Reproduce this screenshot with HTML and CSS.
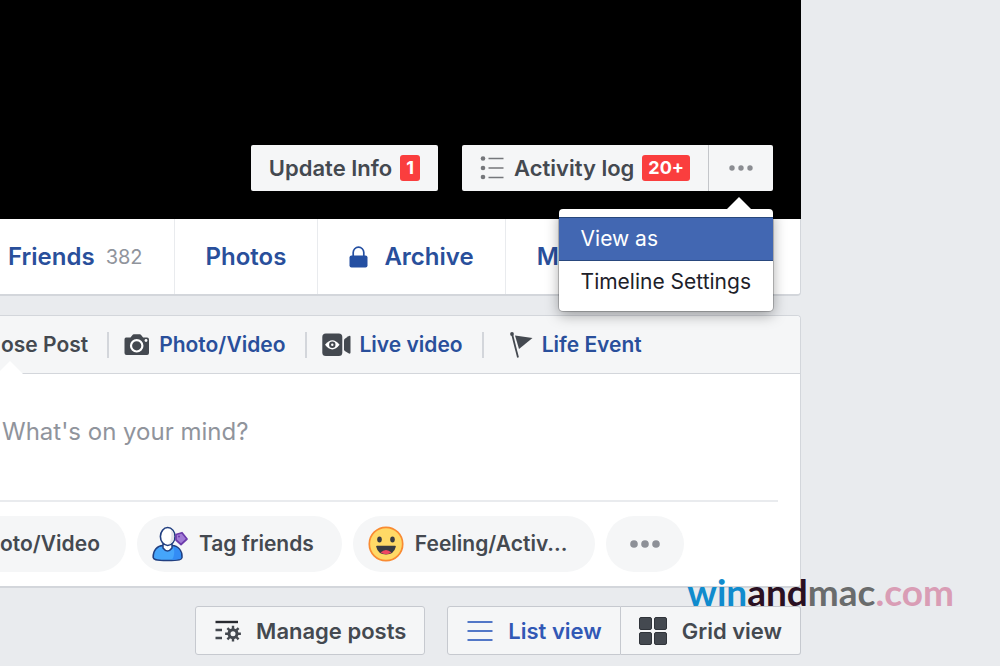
FILE: index.html
```html
<!DOCTYPE html>
<html lang="en">
<head>
    <meta charset="UTF-8">
    <meta name="viewport" content="width=device-width, initial-scale=1.0">
    <title>Timeline</title>
    <link rel="stylesheet" href="styles.css">
</head>
<body>

    <main class="timeline">
        <section class="profile">
            <div class="cover">
                <button class="cover-button" type="button">Update Info <span class="badge">1</span></button>
                <div class="button-group">
                    <button class="cover-button activity" type="button">
                        <svg width="24" height="24" viewBox="0 0 24 24" fill="none" stroke="#75777b">
                            <path d="M8.500 2.500h15M8.500 12h15M8.500 21.500h15" stroke-width="1.500"/>
                            <g fill="#75777b" stroke="none">
                                <circle cx="3" cy="2.500" r="2.300"/>
                                <circle cx="3" cy="12" r="2.300"/>
                                <circle cx="3" cy="21" r="2.300"/>
                            </g>
                        </svg>
                        Activity log <span class="badge">20+</span>
                    </button>
                    <div class="menu-anchor">
                        <button class="cover-button more" type="button" aria-label="More options" aria-expanded="true">
                            <svg width="24" height="6" viewBox="0 0 24 6" fill="#8b8d92">
                                <circle cx="3" cy="3" r="2.700"/>
                                <circle cx="12" cy="3" r="2.700"/>
                                <circle cx="21" cy="3" r="2.700"/>
                            </svg>
                        </button>
                        <div class="menu">
                            <a href="#" class="menu-item selected">View as</a>
                            <a href="#" class="menu-item">Timeline Settings</a>
                        </div>
                    </div>
                </div>
            </div>
            <nav class="tabs">
                <a href="#" class="tab">Friends <span class="count">382</span></a>
                <a href="#" class="tab">Photos</a>
                <a href="#" class="tab">
                    <svg class="lock" width="19" height="22" viewBox="0 0 19 22">
                        <path d="M4.200 10V6.500a5.300 5.300 0 0 1 10.600 0V10" fill="none" stroke="#244fa2" stroke-width="1.700"/>
                        <rect x="0.500" y="9.500" width="18" height="12" rx="2" fill="#244fa2"/>
                    </svg>
                    Archive
                </a>
                <a href="#" class="tab">M</a>
            </nav>
        </section>

        <section class="composer">
            <div class="composer-tabs">
                <a href="#" class="composer-tab current">ose Post</a>
                <a href="#" class="composer-tab">
                    <svg width="26" height="22" viewBox="0 0 26 22">
                        <path d="M2 3.500h4.500L8.500 1q.5-.7 1.300-.7h6q.8 0 1.300.7l2 2.500H23q2 0 2 2V19q0 2-2 2H2.500q-2 0-2-2V5.500q0-2 1.500-2z" fill="#444950"/>
                        <circle cx="12.700" cy="11.800" r="5.700" fill="#444950" stroke="#fff" stroke-width="2.200"/>
                        <circle cx="22" cy="6.500" r="1.400" fill="#fff"/>
                    </svg>
                    Photo/Video
                </a>
                <a href="#" class="composer-tab">
                    <svg width="29" height="24" viewBox="0 0 29 24">
                        <rect x="0.300" y="0.500" width="20" height="22.500" rx="3.500" fill="#444950"/>
                        <path d="M22 7.500q0-1 .8-1.700l3.700-2.600q2-1 2 .8v15.500q0 1.800-2 .8L22.800 18q-.8-.6-.8-1.700z" fill="#444950"/>
                        <path d="M3 11.800Q10.300 2.500 17.600 11.800Q10.300 21 3 11.800z" fill="#fff"/>
                        <circle cx="10.300" cy="11.800" r="3.200" fill="#444950"/>
                        <circle cx="10.300" cy="11.800" r="1.200" fill="#fff"/>
                    </svg>
                    Live video
                </a>
                <a href="#" class="composer-tab">
                    <svg width="23" height="26" viewBox="0 0 23 26">
                        <circle cx="2" cy="2" r="1.900" fill="#444950"/>
                        <path d="M2.300 3L8 25.500" stroke="#444950" stroke-width="1.800"/>
                        <path d="M5 3.500L22.500 6L9 17z" fill="#444950"/>
                    </svg>
                    Life Event
                </a>
            </div>
            <textarea class="status" rows="1" placeholder="What's on your mind?" aria-label="What's on your mind?"></textarea>
            <div class="attachments">
                <button class="pill first" type="button">oto/Video</button>
                <button class="pill" type="button">
                    <svg width="36" height="36" viewBox="0 0 36 36" stroke-linejoin="round">
                        <path d="M1.200 31.500C1 24 5.500 19.800 11 19.500h9c6 .3 10.300 5 10 12-.2 2-2 3-14.500 3S1.400 33.500 1.200 31.500z" fill="#45a5fb" stroke="#213f80" stroke-width="1.600"/>
                        <path d="M21 20.500q3 7-1 13.200c7-.2 9-.7 9.200-2 .3-7-3-10.700-8.200-11.200z" fill="#338cf5"/>
                        <path d="M11 18v4q4.500 6 9 0v-4z" fill="#fff" stroke="#213f80" stroke-width="1.500"/>
                        <ellipse cx="15.700" cy="10.500" rx="7.300" ry="9" fill="#fff" stroke="#213f80" stroke-width="1.600"/>
                        <path d="M19 3.500q1.500 8-2 15c6-1.500 7-12 2-15z" fill="#e1e3e8"/>
                        <path d="M24 8.500l6-1.800 5 6.300-6 5.500-5-4.500z" fill="#a17bd6" stroke="#6c3bab" stroke-width="1.700"/>
                        <circle cx="27" cy="10.500" r="1" fill="#6c3bab"/>
                    </svg>
                    Tag friends
                </button>
                <button class="pill" type="button">
                    <svg width="36" height="36" viewBox="0 0 36 36">
                        <circle cx="18" cy="18" r="16.700" fill="#ffd966" stroke="#f98b32" stroke-width="1.700"/>
                        <ellipse cx="11.500" cy="13.500" rx="2.300" ry="2.900" fill="#383b42"/>
                        <ellipse cx="24.500" cy="13.500" rx="2.300" ry="2.900" fill="#383b42"/>
                        <path d="M9 19.800h18q1 0 .8 1Q26 28.500 18 28.500T8.200 20.800q-.2-1 .8-1z" fill="#383b42"/>
                        <path d="M12.500 26.500Q18 21.500 23.500 26.500Q18 30 12.500 26.500z" fill="#f04662"/>
                    </svg>
                    Feeling/Activ...
                </button>
                <button class="pill dots" type="button" aria-label="More">
                    <svg width="30" height="8" viewBox="0 0 30 8" fill="#8d9097">
                        <circle cx="4" cy="4" r="3.800"/>
                        <circle cx="15" cy="4" r="3.800"/>
                        <circle cx="26" cy="4" r="3.800"/>
                    </svg>
                </button>
            </div>
        </section>

        <div class="view-bar">
            <button class="view-button" type="button">
                <svg width="26" height="22" viewBox="0 0 26 22" fill="none" stroke="#444950">
                    <path d="M0.500 2H23" stroke-width="2.400" stroke="#282b31"/>
                    <path d="M0.500 10H7M0.500 18H7" stroke-width="2.400"/>
                    <circle cx="18" cy="13.700" r="4" stroke-width="3"/>
                    <path d="M18 5.800v4M18 17.600v4M10.100 13.700h4M21.900 13.700h4M12.400 8.100l2.800 2.800M20.800 16.500l2.800 2.800M23.600 8.100l-2.800 2.800M15.200 16.500l-2.800 2.800" stroke-width="2.400"/>
                </svg>
                Manage posts
            </button>
            <div class="button-group">
                <button class="view-button list" type="button">
                    <svg width="26" height="22" viewBox="0 0 26 22" stroke="#1d4db8" stroke-width="1.700">
                        <path d="M0.500 2h25M0.500 11h25M0.500 20h25"/>
                    </svg>
                    List view
                </button>
                <button class="view-button grid" type="button">
                    <svg width="28" height="28" viewBox="0 0 28 28" fill="#444950" stroke="#30343a">
                        <rect x="0.500" y="0.500" width="12" height="12" rx="1.500"/>
                        <rect x="15.500" y="0.500" width="12" height="12" rx="1.500"/>
                        <rect x="0.500" y="15.500" width="12" height="12" rx="1.500"/>
                        <rect x="15.500" y="15.500" width="12" height="12" rx="1.500"/>
                    </svg>
                    Grid view
                </button>
            </div>
        </div>
    </main>

    <div class="watermark"><span class="win">win</span><span class="and">and</span><span class="mac">mac</span><span class="com">.com</span></div>

</body>
</html>
```
FILE: styles.css
```css
:root {
    --page: #e9ebee;
    --surface: #f5f6f7;
    --line: #d3d6db;
    --light-line: #e9ebee;
    --text: #444950;
    --link: #294f9b;
    --muted: #90949c;
    --selected: #4267b2;
    --badge: #fa3e3e;
}

* {
    box-sizing: border-box;
    margin: 0;
    padding: 0;
}

body {
    position: relative;
    min-height: 100vh;
    background: var(--page);
    color: var(--text);
    font-family: Inter, "Liberation Sans", Arial, sans-serif;
    font-size: 22px;
    font-weight: 600;
    line-height: 28px;
}

button {
    border: none;
    color: inherit;
    font: inherit;
    white-space: nowrap;
    cursor: pointer;
}

a {
    color: var(--link);
    text-decoration: none;
    white-space: nowrap;
}

svg {
    flex: none;
}

.timeline {
    width: 80.1%;
}

/* Cover */
.cover {
    display: flex;
    justify-content: flex-end;
    align-items: flex-end;
    gap: 24px;
    height: 219px;
    padding: 28px;
    background: #000;
}

.button-group {
    display: flex;
}

.cover-button {
    display: flex;
    align-items: center;
    gap: 8px;
    height: 46px;
    padding: 0 18px;
    border-radius: 2px;
    background: var(--surface);
}

.activity {
    border-radius: 2px 0 0 2px;
}

.activity svg {
    margin-right: 2px;
}

.badge {
    padding: 0 6px;
    border-radius: 3px;
    background: var(--badge);
    color: #fff;
    font-size: 18px;
    font-weight: 700;
    line-height: 26px;
}

.more {
    justify-content: center;
    width: 65px;
    border-left: 1px solid #c4c6ca;
    border-radius: 0 2px 2px 0;
}

.menu-anchor {
    position: relative;
}

.menu {
    position: absolute;
    z-index: 2;
    top: 64px;
    right: 0;
    padding: 8px 0;
    border-radius: 4px;
    background: #fff;
    box-shadow: 0 0 0 1px rgba(0, 0, 0, 0.2), 0 4px 14px rgba(0, 0, 0, 0.35);
    font-size: 21px;
    font-weight: 400;
}

.menu::before {
    content: "";
    position: absolute;
    right: 22px;
    bottom: 100%;
    border: 12px solid transparent;
    border-top: none;
    border-bottom-color: #fff;
}

.menu-item {
    display: block;
    padding: 7px 22px;
    color: #1d2129;
}

.menu-item.selected {
    border: solid #29487d;
    border-width: 1px 0;
    background: var(--selected);
    color: #fff;
}

/* Tabs */
.tabs {
    display: flex;
    height: 77px;
    border: 1px solid var(--line);
    border-width: 0 1px 2px 0;
    border-radius: 0 0 4px 0;
    background: #fff;
    font-size: 24px;
}

.tab {
    display: flex;
    align-items: center;
    gap: 11px;
    padding: 0 31px;
    border-right: 1px solid var(--light-line);
}

.tab:first-child {
    padding-left: 8px;
}

.tab:last-child {
    border-right: none;
}

.lock {
    margin-right: 5px;
}

.count {
    color: var(--muted);
    font-size: 20px;
    font-weight: 400;
}

/* Composer */
.composer {
    margin-top: 19px;
    border: 1px solid var(--line);
    border-width: 1px 1px 2px 0;
    border-radius: 0 4px 4px 0;
    background: #fff;
}

.composer-tabs {
    position: relative;
    display: flex;
    align-items: center;
    height: 58px;
    border-bottom: 1px solid var(--line);
    border-radius: 0 4px 0 0;
    background: var(--surface);
    font-size: 21px;
}

.composer-tabs::after {
    content: "";
    position: absolute;
    left: -3px;
    bottom: -1px;
    border: 13px solid transparent;
    border-top: none;
    border-bottom-color: #fff;
}

.composer-tab {
    display: flex;
    align-items: center;
    gap: 9px;
    height: 26px;
    padding: 0 19px 0 15px;
    border-right: 2px solid var(--line);
}

.composer-tab:last-child {
    padding-left: 26px;
    border-right: none;
}

.composer-tab.current {
    padding-left: 1px;
    color: var(--text);
}

.status {
    display: block;
    width: 100%;
    height: 126px;
    padding: 43px 22px 42px 2px;
    border: none;
    outline: none;
    resize: none;
    background: transparent;
    color: #1d2129;
    font: 400 24px/30px Inter, "Liberation Sans", Arial, sans-serif;
}

.status::placeholder {
    color: var(--muted);
    opacity: 1;
}

.attachments {
    display: flex;
    gap: 11px;
    margin-right: 22px;
    padding: 14px 0;
    border-top: 2px solid var(--light-line);
    font-size: 21px;
}

.pill {
    display: flex;
    align-items: center;
    gap: 11px;
    height: 56px;
    padding: 0 28px 0 15px;
    border-radius: 28px;
    background: var(--surface);
}

.pill.first {
    padding: 0 26px 0 0;
    border-radius: 0 28px 28px 0;
}

.pill.dots {
    padding: 0 24px;
}

/* View switcher */
.view-bar {
    display: flex;
    justify-content: flex-end;
    gap: 22px;
    padding-top: 18px;
}

.view-button {
    display: flex;
    align-items: center;
    gap: 15px;
    height: 49px;
    padding: 0 18px 0 19px;
    border: 1px solid #c6c9cf;
    border-radius: 3px;
    background: var(--surface);
}

.view-button.list {
    border-radius: 3px 0 0 3px;
    color: #3158b5;
}

.view-button.grid {
    padding-left: 18px;
    border-left: none;
    border-radius: 0 3px 3px 0;
}

/* Site mark over the page corner */
.watermark {
    position: absolute;
    z-index: 3;
    right: 46px;
    bottom: 52px;
    font-family: Lato, "Liberation Sans", sans-serif;
    font-size: 37px;
    font-weight: 700;
    line-height: 44px;
}

.win {
    color: #108bcd;
}

.and {
    color: #2a1022;
}

.mac {
    color: #6a6c6c;
}

.com {
    color: #d99db5;
}
```
